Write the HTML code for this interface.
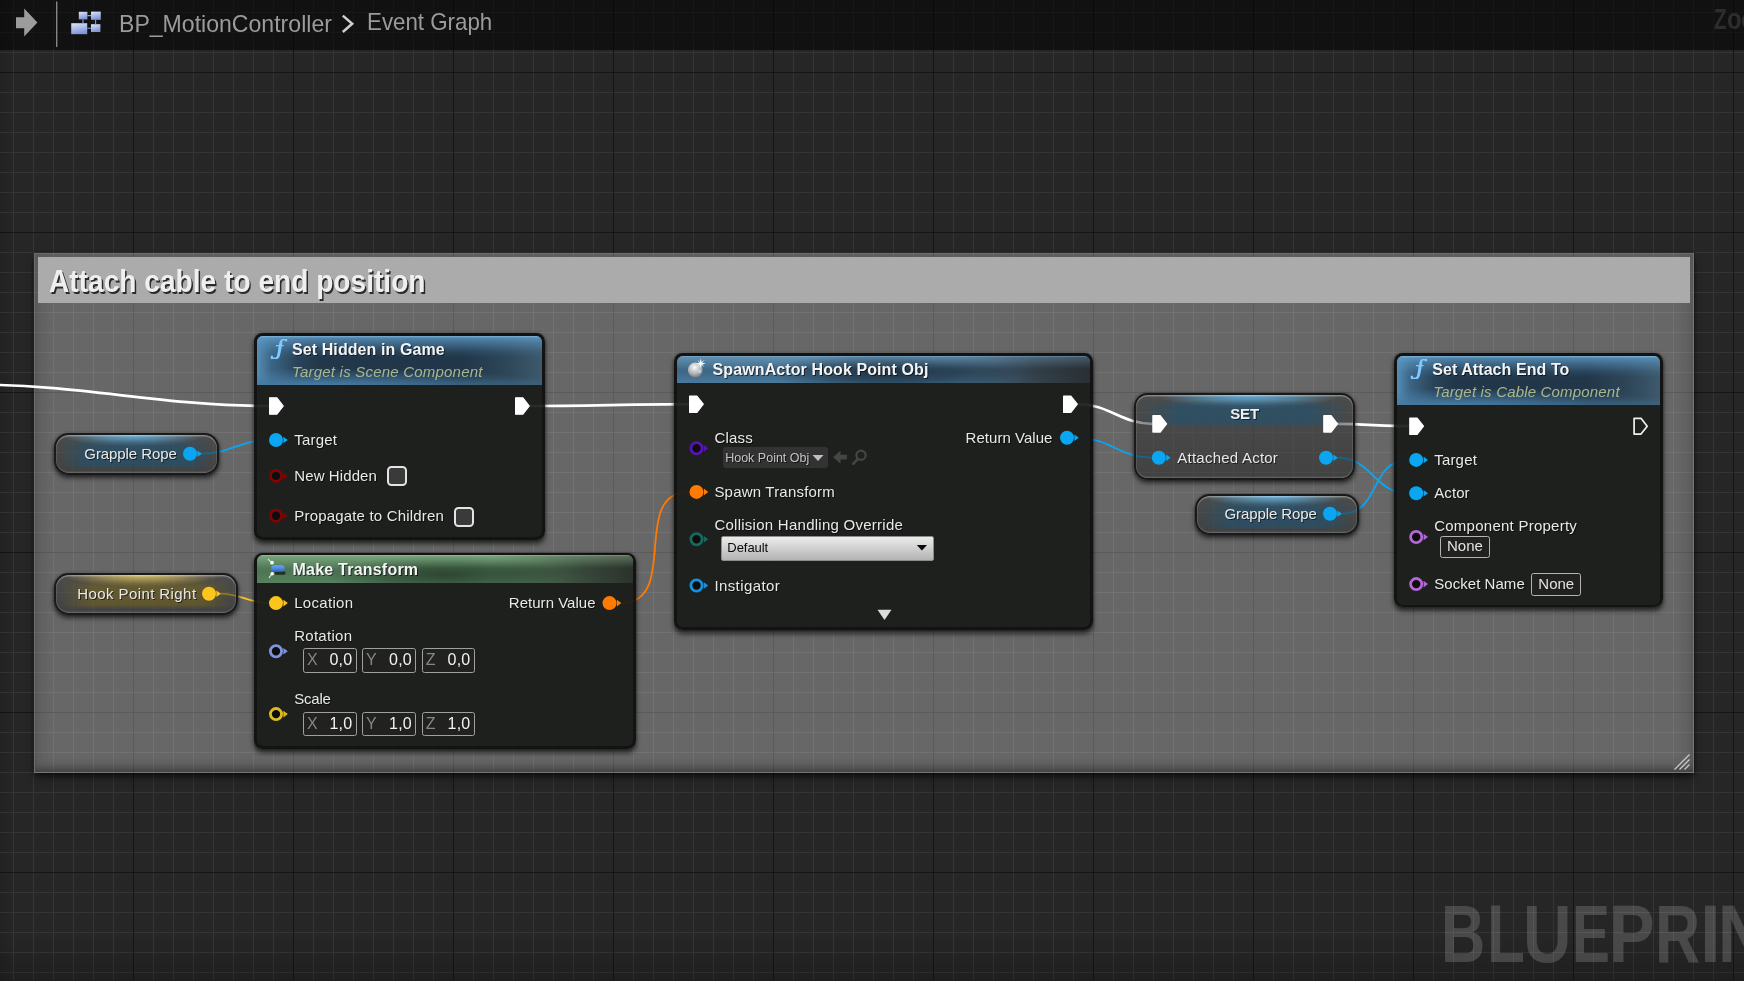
<!DOCTYPE html>
<html><head><meta charset="utf-8"><title>BP_MotionController - Event Graph</title>
<style>

html,body{margin:0;padding:0;background:#262626;}
body{width:1744px;height:981px;overflow:hidden;background:#262626;position:relative;font-family:"Liberation Sans", sans-serif;}
.abs{position:absolute;}
.t{position:absolute;white-space:nowrap;line-height:20px;height:20px;font-family:"Liberation Sans", sans-serif;}
#grid{position:absolute;left:0;top:0;width:1744px;height:981px;
 background-image:
  linear-gradient(to right, #151515 0, #151515 1px, transparent 1px),
  linear-gradient(to bottom, #151515 0, #151515 1px, transparent 1px),
  linear-gradient(to right, #353535 0, #353535 1px, transparent 1px),
  linear-gradient(to bottom, #353535 0, #353535 1px, transparent 1px);
 background-size:160px 160px,160px 160px,20px 20px,20px 20px;
 background-position:133px 0, 0 72px, 13px 0, 0 12px;
}
#vign{position:absolute;left:0;top:0;width:1744px;height:981px;
 background:linear-gradient(to bottom, rgba(0,0,0,0) 0, rgba(0,0,0,0) 940px, rgba(0,0,0,0.18) 981px),linear-gradient(to right, rgba(0,0,0,0.10) 0, rgba(0,0,0,0) 12px);}
#topbar{position:absolute;left:0;top:0;width:1744px;height:50px;background:rgba(0,0,0,0.553);}
#comment{position:absolute;left:34px;top:253px;width:1660px;height:520px;box-sizing:border-box;
 background:rgba(255,255,255,0.30);
 border:1px solid rgba(255,255,255,0.035);
 box-shadow: 0 5px 7px -1px rgba(0,0,0,0.62), 0 0 3px 0 rgba(0,0,0,0.40), inset 0 0 14px 7px rgba(0,0,0,0.115), inset 0 -7px 9px -4px rgba(0,0,0,0.34);
}
#ctitle{position:absolute;left:38px;top:257px;width:1652px;height:46px;background:#ababab;}
.node{position:absolute;border-radius:8.5px;background:rgba(9,9,9,0.89);box-shadow:0 3.5px 5px 0px rgba(0,0,0,0.62), 0 0 3px 0 rgba(0,0,0,0.35);}
.nin{position:absolute;left:2.9px;right:2.9px;top:2.6px;bottom:2.6px;border-radius:5.8px;background:rgba(52,60,50,0.32);overflow:hidden;}
.hdr{position:absolute;left:0;top:0;right:0;}
.vnode{position:absolute;box-sizing:border-box;border:2px solid #1a1a1a;box-shadow:0 3px 5px 0 rgba(0,0,0,0.62), 0 0 3px 0 rgba(0,0,0,0.35);overflow:hidden;}
.vbox{position:absolute;box-sizing:border-box;border:1.6px solid #a0a0a0;background:rgba(40,40,40,0.35);border-radius:2.5px;height:24.4px;}

</style></head><body>
<div id="wrap" style="position:absolute;left:0;top:0;width:1744px;height:981px;will-change:transform;">
<div id="grid"></div>
<div id="vign"></div>
<div class="abs" style="left:1440.8px;top:888.0px;font-size:82.2px;font-weight:bold;line-height:91.82px;color:rgba(255,255,255,0.165);transform-origin:0 0;transform:scaleX(0.7441);white-space:nowrap;">B</div><div class="abs" style="left:1486.7px;top:888.0px;font-size:82.2px;font-weight:bold;line-height:91.82px;color:rgba(255,255,255,0.165);transform-origin:0 0;transform:scaleX(0.7548);white-space:nowrap;">L</div><div class="abs" style="left:1522.9px;top:888.0px;font-size:82.2px;font-weight:bold;line-height:91.82px;color:rgba(255,255,255,0.165);transform-origin:0 0;transform:scaleX(0.8167);white-space:nowrap;">U</div><div class="abs" style="left:1571.7px;top:888.0px;font-size:82.2px;font-weight:bold;line-height:91.82px;color:rgba(255,255,255,0.165);transform-origin:0 0;transform:scaleX(0.6908);white-space:nowrap;">E</div><div class="abs" style="left:1609.1px;top:888.0px;font-size:82.2px;font-weight:bold;line-height:91.82px;color:rgba(255,255,255,0.165);transform-origin:0 0;transform:scaleX(0.833);white-space:nowrap;">P</div><div class="abs" style="left:1654.5px;top:888.0px;font-size:82.2px;font-weight:bold;line-height:91.82px;color:rgba(255,255,255,0.165);transform-origin:0 0;transform:scaleX(0.7619);white-space:nowrap;">R</div><div class="abs" style="left:1700.1px;top:888.0px;font-size:82.2px;font-weight:bold;line-height:91.82px;color:rgba(255,255,255,0.165);transform-origin:0 0;transform:scaleX(0.9041);white-space:nowrap;">I</div><div class="abs" style="left:1718.0px;top:888.0px;font-size:82.2px;font-weight:bold;line-height:91.82px;color:rgba(255,255,255,0.165);transform-origin:0 0;transform:scaleX(0.8279);white-space:nowrap;">N</div>
<div id="comment"></div>
<div id="ctitle"></div>
<div class="t" style="left:49.3px;top:264.3px;height:34px;line-height:34px;font-size:30.5px;font-weight:bold;transform-origin:0 50%;transform:scaleX(0.922);color:#efefef;text-shadow:1.6px 1.6px 0 #2a2a2a;">Attach cable to end position</div>
<svg class="abs" style="left:1670px;top:750px" width="24" height="24" viewBox="0 0 24 24"><g stroke="#c8c8c8" stroke-width="1.3" stroke-linecap="butt"><path d="M4.5,19.5 L19.5,4.5"/><path d="M9.5,19.5 L19.5,9.5"/><path d="M14.5,19.5 L19.5,14.5"/></g></svg>
<svg class="abs" style="left:0;top:0" width="1744" height="981" viewBox="0 0 1744 981">
<path d="M-25.4,384.6 C79.9,384.6 163.7,406.0 269.0,406.0" stroke="#ffffff" stroke-width="2.7" fill="none" stroke-linecap="round"/>
<path d="M530.0,406.0 C583.6,406.0 635.4,404.2 689.0,404.2" stroke="#ffffff" stroke-width="2.7" fill="none" stroke-linecap="round"/>
<path d="M1078.0,404.2 C1109.4,404.2 1121.1,423.9 1152.5,423.9" stroke="#ffffff" stroke-width="2.7" fill="none" stroke-linecap="round"/>
<path d="M1338.0,423.9 C1362.6,423.9 1384.8,426.2 1409.4,426.2" stroke="#ffffff" stroke-width="2.7" fill="none" stroke-linecap="round"/>
<path d="M201.5,453.8 C228.6,453.8 241.9,440.0 269.0,440.0" stroke="#0aa6f2" stroke-width="1.8" fill="none" stroke-linecap="round"/>
<path d="M220.5,593.7 C239.8,593.7 249.7,603.1 269.0,603.1" stroke="#fcc51c" stroke-width="1.8" fill="none" stroke-linecap="round"/>
<path d="M621.0,603.1 C680.7,603.1 629.3,491.9 689.0,491.9" stroke="#ff7a00" stroke-width="1.8" fill="none" stroke-linecap="round"/>
<path d="M1077.5,437.8 C1109.0,437.8 1120.5,457.7 1152.0,457.7" stroke="#0aa6f2" stroke-width="1.8" fill="none" stroke-linecap="round"/>
<path d="M1337.0,457.7 C1372.9,457.7 1373.1,493.3 1409.0,493.3" stroke="#0aa6f2" stroke-width="1.8" fill="none" stroke-linecap="round"/>
<path d="M1341.0,513.8 C1381.6,513.8 1368.4,459.9 1409.0,459.9" stroke="#0aa6f2" stroke-width="1.8" fill="none" stroke-linecap="round"/>
</svg>
<div class="vnode" style="left:54.2px;top:432.8px;width:164.6px;height:42.7px;border-radius:14.5px;background:radial-gradient(ellipse 44% 32% at 48% 0%, rgba(95,175,222,0.95) 0%, rgba(95,175,222,0.5) 55%, rgba(95,175,222,0) 100%),linear-gradient(to bottom, rgba(255,255,255,0.07), rgba(255,255,255,0.02)),rgba(14,16,14,0.46);"><div class="abs" style="left:0;right:0;top:4px;height:30px;background:linear-gradient(to bottom, rgba(36,82,112,0) 0%, rgba(36,82,112,0.66) 24%, rgba(36,82,112,0.66) 86%, rgba(36,82,112,0) 100%);-webkit-mask-image:linear-gradient(to right, transparent 2%, #000 20%, #000 80%, transparent 98%);mask-image:linear-gradient(to right, transparent 2%, #000 20%, #000 80%, transparent 98%);"></div><div class="abs" style="left:0;top:0;right:0;bottom:0;border-radius:12.5px;box-shadow:inset 0 1.5px 1px rgba(255,255,255,0.30), inset 0 0 0 1px rgba(255,255,255,0.07), inset 0 -1.5px 1px rgba(255,255,255,0.10);"></div></div>
<div class="vnode" style="left:54.2px;top:573.1px;width:183.7px;height:42.3px;border-radius:14.5px;background:radial-gradient(ellipse 44% 32% at 48% 0%, rgba(215,188,95,0.95) 0%, rgba(215,188,95,0.5) 55%, rgba(215,188,95,0) 100%),linear-gradient(to bottom, rgba(255,255,255,0.07), rgba(255,255,255,0.02)),rgba(14,16,14,0.46);"><div class="abs" style="left:0;right:0;top:4px;height:30px;background:linear-gradient(to bottom, rgba(120,102,30,0) 0%, rgba(120,102,30,0.55) 24%, rgba(120,102,30,0.55) 86%, rgba(120,102,30,0) 100%);-webkit-mask-image:linear-gradient(to right, transparent 2%, #000 20%, #000 80%, transparent 98%);mask-image:linear-gradient(to right, transparent 2%, #000 20%, #000 80%, transparent 98%);"></div><div class="abs" style="left:0;top:0;right:0;bottom:0;border-radius:12.5px;box-shadow:inset 0 1.5px 1px rgba(255,255,255,0.30), inset 0 0 0 1px rgba(255,255,255,0.07), inset 0 -1.5px 1px rgba(255,255,255,0.10);"></div></div>
<div class="vnode" style="left:1134.4px;top:393.3px;width:220.2px;height:86.4px;border-radius:13.5px;background:radial-gradient(ellipse 42% 17% at 52% 0%, rgba(95,175,222,0.95) 0%, rgba(95,175,222,0.5) 55%, rgba(95,175,222,0) 100%),linear-gradient(to bottom, rgba(255,255,255,0.07), rgba(255,255,255,0.02)),rgba(14,16,14,0.46);"><div class="abs" style="left:0;right:0;top:5px;height:27px;background:linear-gradient(to bottom, rgba(36,82,112,0) 0%, rgba(36,82,112,0.66) 24%, rgba(36,82,112,0.66) 86%, rgba(36,82,112,0) 100%);-webkit-mask-image:linear-gradient(to right, transparent 2%, #000 20%, #000 80%, transparent 98%);mask-image:linear-gradient(to right, transparent 2%, #000 20%, #000 80%, transparent 98%);"></div><div class="abs" style="left:0;top:0;right:0;bottom:0;border-radius:11.5px;box-shadow:inset 0 1.5px 1px rgba(255,255,255,0.30), inset 0 0 0 1px rgba(255,255,255,0.07), inset 0 -1.5px 1px rgba(255,255,255,0.10);"></div></div>
<div class="vnode" style="left:1194.5px;top:493.6px;width:164.3px;height:41.4px;border-radius:14.5px;background:radial-gradient(ellipse 44% 32% at 48% 0%, rgba(95,175,222,0.95) 0%, rgba(95,175,222,0.5) 55%, rgba(95,175,222,0) 100%),linear-gradient(to bottom, rgba(255,255,255,0.07), rgba(255,255,255,0.02)),rgba(14,16,14,0.46);"><div class="abs" style="left:0;right:0;top:4px;height:30px;background:linear-gradient(to bottom, rgba(36,82,112,0) 0%, rgba(36,82,112,0.66) 24%, rgba(36,82,112,0.66) 86%, rgba(36,82,112,0) 100%);-webkit-mask-image:linear-gradient(to right, transparent 2%, #000 20%, #000 80%, transparent 98%);mask-image:linear-gradient(to right, transparent 2%, #000 20%, #000 80%, transparent 98%);"></div><div class="abs" style="left:0;top:0;right:0;bottom:0;border-radius:12.5px;box-shadow:inset 0 1.5px 1px rgba(255,255,255,0.30), inset 0 0 0 1px rgba(255,255,255,0.07), inset 0 -1.5px 1px rgba(255,255,255,0.10);"></div></div>
<svg class="abs" style="left:0;top:0" width="1744" height="981" viewBox="0 0 1744 981">
<circle cx="190.0" cy="453.8" r="7.0" fill="#0aa6f2"/><path d="M197.4,450.5 L201.8,453.8 L197.4,457.1 Z" fill="#0aa6f2"/>
<circle cx="209.0" cy="593.7" r="7.0" fill="#fcc51c"/><path d="M216.4,590.4 L220.8,593.7 L216.4,597.0 Z" fill="#fcc51c"/>
<path d="M1152.9,415.7 L1160.2,415.7 L1166.6,423.9 L1160.2,432.1 L1152.9,432.1 Z" fill="#ffffff" stroke="#ffffff" stroke-width="1.2" stroke-linejoin="round"/>
<path d="M1323.8,415.7 L1331.1,415.7 L1337.5,423.9 L1331.1,432.1 L1323.8,432.1 Z" fill="#ffffff" stroke="#ffffff" stroke-width="1.2" stroke-linejoin="round"/>
<circle cx="1158.8" cy="457.7" r="7.0" fill="#0aa6f2"/><path d="M1166.2,454.4 L1170.6,457.7 L1166.2,461.0 Z" fill="#0aa6f2"/>
<circle cx="1326.0" cy="457.7" r="7.0" fill="#0aa6f2"/><path d="M1333.4,454.4 L1337.8,457.7 L1333.4,461.0 Z" fill="#0aa6f2"/>
<circle cx="1330.0" cy="513.8" r="7.0" fill="#0aa6f2"/><path d="M1337.4,510.5 L1341.8,513.8 L1337.4,517.1 Z" fill="#0aa6f2"/>
</svg>
<div class="t" style="left:84.3px;top:444px;font-size:15px;letter-spacing:-0.08px;color:#e9e9e9;font-weight:normal;font-style:normal;text-shadow:1px 1px 0 rgba(0,0,0,0.6);">Grapple Rope</div>
<div class="t" style="left:77.2px;top:584px;font-size:15px;letter-spacing:0.42px;color:#e9e9e9;font-weight:normal;font-style:normal;text-shadow:1px 1px 0 rgba(0,0,0,0.6);">Hook Point Right</div>
<div class="t" style="left:1224.4px;top:504px;font-size:15px;letter-spacing:-0.08px;color:#e9e9e9;font-weight:normal;font-style:normal;text-shadow:1px 1px 0 rgba(0,0,0,0.6);">Grapple Rope</div>
<div class="t" style="left:1177.3px;top:448px;font-size:15px;letter-spacing:0.23px;color:#e9e9e9;font-weight:normal;font-style:normal;text-shadow:1px 1px 0 rgba(0,0,0,0.6);">Attached Actor</div>
<div class="t" style="left:1230.2px;top:404px;font-size:15px;letter-spacing:-0.1px;color:#f0f0f0;font-weight:bold;font-style:normal;text-shadow:1px 1px 0 rgba(0,0,0,0.6);">SET</div>
<div class="node" style="left:254.1px;top:333.0px;width:290.9px;height:206.8px;"><div class="nin"><div class="hdr" style="height:49.2px;background:linear-gradient(to bottom, rgba(150,205,240,0.55) 0px, rgba(130,185,225,0) 2px),linear-gradient(to bottom, rgba(98,158,203,0.85) 0%, rgba(90,150,195,0.55) 14%, rgba(80,140,185,0.16) 32%, rgba(80,140,185,0) 44%),radial-gradient(ellipse 85% 34% at 22% 100%, rgba(72,128,170,0.9) 0%, rgba(72,128,170,0.5) 45%, rgba(72,128,170,0) 100%),linear-gradient(to top, rgba(62,100,128,0.55) 0%, rgba(62,100,128,0) 14%),linear-gradient(to right, rgba(88,145,188,0.95) 0%, rgba(82,138,180,0.55) 5%, rgba(80,135,175,0.15) 14%, rgba(80,135,175,0) 22%),linear-gradient(to left, rgba(80,112,132,0.62) 0%, rgba(75,108,128,0.30) 12%, rgba(70,100,120,0) 28%),linear-gradient(to right, #22384a, #213648);"></div></div></div>
<div class="node" style="left:254.1px;top:552.9px;width:381.8px;height:196.1px;"><div class="nin"><div class="hdr" style="height:27.3px;background:linear-gradient(to bottom, rgba(205,235,205,0.55) 0px, rgba(165,205,165,0.36) 1.5px, rgba(150,190,150,0.14) 9px, rgba(150,190,150,0) 13px),radial-gradient(ellipse 32% 70% at 50% 72%, rgba(26,40,28,0.62) 0%, rgba(26,40,28,0.35) 55%, rgba(26,40,28,0) 100%),linear-gradient(to right, rgba(44,50,44,0) 0%, rgba(44,50,44,0) 62%, rgba(44,50,44,0.72) 88%, rgba(40,44,40,0.92) 100%),linear-gradient(to bottom, #5d8b64 0%, #4c7553 60%, #568260 100%);"></div></div></div>
<div class="node" style="left:674.2px;top:353.0px;width:418.8px;height:276.8px;"><div class="nin"><div class="hdr" style="height:27.2px;background:linear-gradient(to bottom, rgba(150,200,235,0.60) 0px, rgba(125,175,215,0.30) 1.5px, rgba(120,170,210,0.10) 9px, rgba(120,170,210,0) 13px),radial-gradient(ellipse 30% 75% at 52% 62%, rgba(26,42,56,0.85) 0%, rgba(26,42,56,0.55) 50%, rgba(26,42,56,0) 100%),linear-gradient(to right, rgba(44,46,48,0) 0%, rgba(44,46,48,0) 62%, rgba(44,46,48,0.75) 88%, rgba(40,42,44,0.92) 100%),linear-gradient(to bottom, #55829f 0%, #3e6685 55%, #4a7a9c 100%);"></div></div></div>
<div class="node" style="left:1394.2px;top:353.0px;width:269.2px;height:254.4px;"><div class="nin"><div class="hdr" style="height:49.4px;background:linear-gradient(to bottom, rgba(150,205,240,0.55) 0px, rgba(130,185,225,0) 2px),linear-gradient(to bottom, rgba(98,158,203,0.85) 0%, rgba(90,150,195,0.55) 14%, rgba(80,140,185,0.16) 32%, rgba(80,140,185,0) 44%),radial-gradient(ellipse 85% 34% at 22% 100%, rgba(72,128,170,0.9) 0%, rgba(72,128,170,0.5) 45%, rgba(72,128,170,0) 100%),linear-gradient(to top, rgba(62,100,128,0.55) 0%, rgba(62,100,128,0) 14%),linear-gradient(to right, rgba(88,145,188,0.95) 0%, rgba(82,138,180,0.55) 5%, rgba(80,135,175,0.15) 14%, rgba(80,135,175,0) 22%),linear-gradient(to left, rgba(80,112,132,0.62) 0%, rgba(75,108,128,0.30) 12%, rgba(70,100,120,0) 28%),linear-gradient(to right, #22384a, #213648);"></div></div></div>
<svg class="abs" style="left:0;top:0" width="1744" height="981" viewBox="0 0 1744 981">
<path d="M269.6,397.8 L276.9,397.8 L283.3,406.0 L276.9,414.2 L269.6,414.2 Z" fill="#ffffff" stroke="#ffffff" stroke-width="1.2" stroke-linejoin="round"/>
<path d="M515.6,397.8 L522.9,397.8 L529.3,406.0 L522.9,414.2 L515.6,414.2 Z" fill="#ffffff" stroke="#ffffff" stroke-width="1.2" stroke-linejoin="round"/>
<circle cx="276.0" cy="440.0" r="7.0" fill="#0aa6f2"/><path d="M283.4,436.7 L287.8,440.0 L283.4,443.3 Z" fill="#0aa6f2"/>
<circle cx="276.0" cy="475.9" r="5.6" fill="#0d0d0d" stroke="#800404" stroke-width="2.8"/><path d="M283.4,472.6 L287.8,475.9 L283.4,479.2 Z" fill="#800404"/>
<circle cx="276.0" cy="515.7" r="5.6" fill="#0d0d0d" stroke="#800404" stroke-width="2.8"/><path d="M283.4,512.4 L287.8,515.7 L283.4,519.0 Z" fill="#800404"/>
<circle cx="276.0" cy="603.1" r="7.0" fill="#fcc51c"/><path d="M283.4,599.8 L287.8,603.1 L283.4,606.4 Z" fill="#fcc51c"/>
<circle cx="609.5" cy="603.1" r="7.0" fill="#ff7a00"/><path d="M616.9,599.8 L621.3,603.1 L616.9,606.4 Z" fill="#ff7a00"/>
<circle cx="276.0" cy="651.3" r="5.6" fill="#0d0d0d" stroke="#7f93e0" stroke-width="2.8"/><path d="M283.4,648.0 L287.8,651.3 L283.4,654.6 Z" fill="#7f93e0"/>
<circle cx="276.0" cy="714.1" r="5.6" fill="#0d0d0d" stroke="#dfbb1f" stroke-width="2.8"/><path d="M283.4,710.8 L287.8,714.1 L283.4,717.4 Z" fill="#dfbb1f"/>
<path d="M689.6,396.0 L696.9,396.0 L703.3,404.2 L696.9,412.4 L689.6,412.4 Z" fill="#ffffff" stroke="#ffffff" stroke-width="1.2" stroke-linejoin="round"/>
<path d="M1063.6,396.0 L1070.9,396.0 L1077.3,404.2 L1070.9,412.4 L1063.6,412.4 Z" fill="#ffffff" stroke="#ffffff" stroke-width="1.2" stroke-linejoin="round"/>
<circle cx="696.5" cy="448.2" r="5.6" fill="#0d0d0d" stroke="#5a12b8" stroke-width="2.8"/><path d="M703.9,444.9 L708.3,448.2 L703.9,451.5 Z" fill="#5a12b8"/>
<circle cx="1067.0" cy="437.8" r="7.0" fill="#0aa6f2"/><path d="M1074.4,434.5 L1078.8,437.8 L1074.4,441.1 Z" fill="#0aa6f2"/>
<circle cx="696.5" cy="491.9" r="7.0" fill="#ff7a00"/><path d="M703.9,488.6 L708.3,491.9 L703.9,495.2 Z" fill="#ff7a00"/>
<circle cx="696.5" cy="539.3" r="5.6" fill="#0d0d0d" stroke="#166a5e" stroke-width="2.8"/><path d="M703.9,536.0 L708.3,539.3 L703.9,542.6 Z" fill="#166a5e"/>
<circle cx="696.5" cy="585.5" r="5.6" fill="#0d0d0d" stroke="#1490dc" stroke-width="2.8"/><path d="M703.9,582.2 L708.3,585.5 L703.9,588.8 Z" fill="#1490dc"/>
<path d="M877.5,609.8 L891.5,609.8 L884.5,620 Z" fill="#dcdcdc"/>
<path d="M1409.8,418.0 L1417.1,418.0 L1423.5,426.2 L1417.1,434.4 L1409.8,434.4 Z" fill="#ffffff" stroke="#ffffff" stroke-width="1.2" stroke-linejoin="round"/>
<path d="M1634.1,418.3 L1641.0,418.3 L1647.2,426.2 L1641.0,434.1 L1634.1,434.1 Z" fill="none" stroke="#f0f0f0" stroke-width="1.7" stroke-linejoin="round"/>
<circle cx="1416.2" cy="459.9" r="7.0" fill="#0aa6f2"/><path d="M1423.6,456.6 L1428.0,459.9 L1423.6,463.2 Z" fill="#0aa6f2"/>
<circle cx="1416.2" cy="493.3" r="7.0" fill="#0aa6f2"/><path d="M1423.6,490.0 L1428.0,493.3 L1423.6,496.6 Z" fill="#0aa6f2"/>
<circle cx="1416.2" cy="537.0" r="5.6" fill="#0d0d0d" stroke="#b466d6" stroke-width="2.8"/><path d="M1423.6,533.7 L1428.0,537.0 L1423.6,540.3 Z" fill="#b466d6"/>
<circle cx="1416.2" cy="584.1" r="5.6" fill="#0d0d0d" stroke="#b466d6" stroke-width="2.8"/><path d="M1423.6,580.8 L1428.0,584.1 L1423.6,587.4 Z" fill="#b466d6"/>
</svg>
<div class="t" style="left:292.0px;top:340px;font-size:16px;letter-spacing:0.09px;color:#f4f4f4;font-weight:bold;font-style:normal;text-shadow:1px 1px 0 rgba(0,0,0,0.6);">Set Hidden in Game</div>
<div class="t" style="left:292.0px;top:362px;font-size:15px;letter-spacing:0.21px;color:#aab68c;font-weight:normal;font-style:italic;">Target is Scene Component</div>
<div class="t" style="left:294.3px;top:430px;font-size:15px;letter-spacing:0.2px;color:#e9e9e9;font-weight:normal;font-style:normal;text-shadow:1px 1px 0 rgba(0,0,0,0.6);">Target</div>
<div class="t" style="left:294.3px;top:466px;font-size:15px;letter-spacing:0.1px;color:#e9e9e9;font-weight:normal;font-style:normal;text-shadow:1px 1px 0 rgba(0,0,0,0.6);">New Hidden</div>
<div class="t" style="left:294.3px;top:506px;font-size:15px;letter-spacing:0.18px;color:#e9e9e9;font-weight:normal;font-style:normal;text-shadow:1px 1px 0 rgba(0,0,0,0.6);">Propagate to Children</div>
<div class="abs" style="left:386.6px;top:466.4px;width:20px;height:20px;box-sizing:border-box;border:2.4px solid #e4e4e4;border-radius:4.5px;background:#3a3a3a;"></div>
<div class="abs" style="left:453.8px;top:506.5px;width:20px;height:20px;box-sizing:border-box;border:2.4px solid #e4e4e4;border-radius:4.5px;background:#3a3a3a;"></div>
<div class="t" style="left:292.5px;top:560px;font-size:16px;letter-spacing:0.22px;color:#f4f4f4;font-weight:bold;font-style:normal;text-shadow:1px 1px 0 rgba(0,0,0,0.6);">Make Transform</div>
<div class="t" style="left:294.2px;top:593px;font-size:15px;letter-spacing:0.3px;color:#e9e9e9;font-weight:normal;font-style:normal;text-shadow:1px 1px 0 rgba(0,0,0,0.6);">Location</div>
<div class="t" style="left:294.2px;top:626px;font-size:15px;letter-spacing:0.28px;color:#e9e9e9;font-weight:normal;font-style:normal;text-shadow:1px 1px 0 rgba(0,0,0,0.6);">Rotation</div>
<div class="t" style="left:294.2px;top:689px;font-size:15px;letter-spacing:-0.2px;color:#e9e9e9;font-weight:normal;font-style:normal;text-shadow:1px 1px 0 rgba(0,0,0,0.6);">Scale</div>
<div class="t" style="right:1148.4px;top:593px;font-size:15px;letter-spacing:0.03px;color:#e9e9e9;font-weight:normal;font-style:normal;text-shadow:1px 1px 0 rgba(0,0,0,0.6);">Return Value</div>
<div class="vbox" style="left:303.1px;top:648.4px;width:53.8px;"><div class="t" style="left:3px;top:1px;font-size:16px;color:#858585;">X</div><div class="t" style="right:3.6px;top:1px;font-size:16px;color:#f2f2f2;letter-spacing:0.2px;">0,0</div></div>
<div class="vbox" style="left:362.1px;top:648.4px;width:54.4px;"><div class="t" style="left:3px;top:1px;font-size:16px;color:#858585;">Y</div><div class="t" style="right:3.6px;top:1px;font-size:16px;color:#f2f2f2;letter-spacing:0.2px;">0,0</div></div>
<div class="vbox" style="left:421.8px;top:648.4px;width:53.2px;"><div class="t" style="left:3px;top:1px;font-size:16px;color:#858585;">Z</div><div class="t" style="right:3.6px;top:1px;font-size:16px;color:#f2f2f2;letter-spacing:0.2px;">0,0</div></div>
<div class="vbox" style="left:303.1px;top:711.5px;width:53.8px;"><div class="t" style="left:3px;top:1px;font-size:16px;color:#858585;">X</div><div class="t" style="right:3.6px;top:1px;font-size:16px;color:#f2f2f2;letter-spacing:0.2px;">1,0</div></div>
<div class="vbox" style="left:362.1px;top:711.5px;width:54.4px;"><div class="t" style="left:3px;top:1px;font-size:16px;color:#858585;">Y</div><div class="t" style="right:3.6px;top:1px;font-size:16px;color:#f2f2f2;letter-spacing:0.2px;">1,0</div></div>
<div class="vbox" style="left:421.8px;top:711.5px;width:53.2px;"><div class="t" style="left:3px;top:1px;font-size:16px;color:#858585;">Z</div><div class="t" style="right:3.6px;top:1px;font-size:16px;color:#f2f2f2;letter-spacing:0.2px;">1,0</div></div>
<div class="t" style="left:712.6px;top:360px;font-size:16px;letter-spacing:0.1px;color:#f4f4f4;font-weight:bold;font-style:normal;text-shadow:1px 1px 0 rgba(0,0,0,0.6);">SpawnActor Hook Point Obj</div>
<div class="t" style="left:714.4px;top:428px;font-size:15px;letter-spacing:0.2px;color:#e9e9e9;font-weight:normal;font-style:normal;text-shadow:1px 1px 0 rgba(0,0,0,0.6);">Class</div>
<div class="t" style="left:714.4px;top:482px;font-size:15px;letter-spacing:0.2px;color:#e9e9e9;font-weight:normal;font-style:normal;text-shadow:1px 1px 0 rgba(0,0,0,0.6);">Spawn Transform</div>
<div class="t" style="left:714.4px;top:515px;font-size:15px;letter-spacing:0.26px;color:#e9e9e9;font-weight:normal;font-style:normal;text-shadow:1px 1px 0 rgba(0,0,0,0.6);">Collision Handling Override</div>
<div class="t" style="left:714.4px;top:576px;font-size:15px;letter-spacing:0.4px;color:#e9e9e9;font-weight:normal;font-style:normal;text-shadow:1px 1px 0 rgba(0,0,0,0.6);">Instigator</div>
<div class="t" style="right:691.6px;top:428px;font-size:15px;letter-spacing:0.03px;color:#e9e9e9;font-weight:normal;font-style:normal;text-shadow:1px 1px 0 rgba(0,0,0,0.6);">Return Value</div>
<div class="abs" style="left:722.5px;top:447px;width:105px;height:21px;background:#333333;border-radius:3px;"></div>
<div class="t" style="left:725.2px;top:448px;font-size:12.5px;letter-spacing:0.0px;color:#c4c4c4;font-weight:normal;font-style:normal;text-shadow:1px 1px 0 rgba(0,0,0,0.6);">Hook Point Obj</div>
<svg class="abs" style="left:0;top:0" width="1744" height="981" viewBox="0 0 1744 981">
<path d="M812.5,455 L823.5,455 L818,461 Z" fill="#c0c0c0"/>
<path d="M833,457.2 L840.5,450.8 L840.5,454.8 L846.8,454.8 L846.8,459.6 L840.5,459.6 L840.5,463.6 Z" fill="#454545"/>
<circle cx="861" cy="455.2" r="4.6" fill="none" stroke="#454545" stroke-width="2.2"/><path d="M857.8,459 L853.2,463.8" stroke="#454545" stroke-width="2.6" stroke-linecap="round"/>
</svg>
<div class="abs" style="left:721px;top:535.6px;width:213px;height:25px;box-sizing:border-box;border:1px solid #8d8d8d;border-radius:2px;background:linear-gradient(to bottom,#ececec 0%,#d2d2d2 45%,#b4b4b4 100%);"></div>
<div class="t" style="left:727.3px;top:538px;font-size:13px;letter-spacing:-0.05px;color:#0a0a0a;font-weight:normal;font-style:normal;">Default</div>
<svg class="abs" style="left:915px;top:543px" width="14" height="10" viewBox="0 0 14 10"><path d="M1.8,2 L12,2 L6.9,7.6 Z" fill="#0a0a0a"/></svg>
<div class="t" style="left:1432.2px;top:360px;font-size:16px;letter-spacing:0.07px;color:#f4f4f4;font-weight:bold;font-style:normal;text-shadow:1px 1px 0 rgba(0,0,0,0.6);">Set Attach End To</div>
<div class="t" style="left:1433.2px;top:382px;font-size:15px;letter-spacing:0.18px;color:#aab68c;font-weight:normal;font-style:italic;">Target is Cable Component</div>
<div class="t" style="left:1434.2px;top:450px;font-size:15px;letter-spacing:0.2px;color:#e9e9e9;font-weight:normal;font-style:normal;text-shadow:1px 1px 0 rgba(0,0,0,0.6);">Target</div>
<div class="t" style="left:1434.2px;top:483px;font-size:15px;letter-spacing:0.1px;color:#e9e9e9;font-weight:normal;font-style:normal;text-shadow:1px 1px 0 rgba(0,0,0,0.6);">Actor</div>
<div class="t" style="left:1434.2px;top:516px;font-size:15px;letter-spacing:0.25px;color:#e9e9e9;font-weight:normal;font-style:normal;text-shadow:1px 1px 0 rgba(0,0,0,0.6);">Component Property</div>
<div class="t" style="left:1434.2px;top:574px;font-size:15px;letter-spacing:0.05px;color:#e9e9e9;font-weight:normal;font-style:normal;text-shadow:1px 1px 0 rgba(0,0,0,0.6);">Socket Name</div>
<div class="vbox" style="left:1440.0px;top:535.5px;width:50px;height:22.3px;border-color:#b4b4b4;"><div class="t" style="left:6px;top:-0.4px;font-size:15px;color:#e2e2e2;">None</div></div>
<div class="vbox" style="left:1531.3px;top:573.3px;width:50px;height:22.3px;border-color:#b4b4b4;"><div class="t" style="left:6px;top:-0.4px;font-size:15px;color:#e2e2e2;">None</div></div>
<svg class="abs" style="left:270px;top:338px" width="19" height="23" viewBox="0 0 19 23"><path d="M17.1,1.05 L17.1,3.35 L15.1,3.35 C14.8,2.5 14.2,2.2 13.6,2.3 C12.9,2.4 12.5,3 12.3,4 L12.05,7 L13.6,7 L13.6,8.2 L11.75,8.2 C11.2,11.5 10.7,14.8 9.9,17.4 C9.1,20 8,21.1 6.2,21.1 L0.75,21.1 L0.75,17.7 L2.9,17.7 C2.9,18.8 3,19.55 3.6,19.55 L5.3,19.55 C6.3,19.55 6.8,18.6 7.15,17.1 C7.8,14.2 8.2,11 8.55,8.2 L5.95,8.2 L5.95,7 L8.85,7 C9.05,5.8 9.3,4.8 9.6,3.95 C10,2.7 10.5,1.9 11.15,1.5 C11.9,1 12.8,0.9 13.6,0.9 Z" fill="#7ccaff"/></svg>
<svg class="abs" style="left:1410.1px;top:358px" width="19" height="23" viewBox="0 0 19 23"><path d="M17.1,1.05 L17.1,3.35 L15.1,3.35 C14.8,2.5 14.2,2.2 13.6,2.3 C12.9,2.4 12.5,3 12.3,4 L12.05,7 L13.6,7 L13.6,8.2 L11.75,8.2 C11.2,11.5 10.7,14.8 9.9,17.4 C9.1,20 8,21.1 6.2,21.1 L0.75,21.1 L0.75,17.7 L2.9,17.7 C2.9,18.8 3,19.55 3.6,19.55 L5.3,19.55 C6.3,19.55 6.8,18.6 7.15,17.1 C7.8,14.2 8.2,11 8.55,8.2 L5.95,8.2 L5.95,7 L8.85,7 C9.05,5.8 9.3,4.8 9.6,3.95 C10,2.7 10.5,1.9 11.15,1.5 C11.9,1 12.8,0.9 13.6,0.9 Z" fill="#7ccaff"/></svg>
<svg class="abs" style="left:266px;top:557px" width="22" height="24" viewBox="0 0 22 24"><defs><linearGradient id="pg" x1="0" y1="0" x2="0" y2="1"><stop offset="0" stop-color="#6aa6ee"/><stop offset="0.45" stop-color="#4f8be4"/><stop offset="1" stop-color="#3463c2"/></linearGradient></defs><rect x="8.8" y="14.6" width="10.6" height="3.2" rx="1.4" fill="#1c2c1f" opacity="0.92"/><path d="M2.3,2.4 L5.6,5.4 M3.2,20.6 L5.8,17.2" stroke="#f4f4f4" stroke-width="1.1" stroke-linecap="round" opacity="0.85"/><circle cx="6" cy="5.7" r="1.85" fill="#ffffff"/><circle cx="6.2" cy="16.8" r="1.8" fill="#ffffff"/><rect x="5.2" y="8.3" width="13.4" height="6.4" rx="3.2" fill="url(#pg)"/></svg>
<svg class="abs" style="left:686px;top:357px" width="22" height="22" viewBox="0 0 22 22"><defs><radialGradient id="sg" cx="45%" cy="32%" r="72%"><stop offset="0" stop-color="#ffffff"/><stop offset="0.18" stop-color="#e6e6e6"/><stop offset="0.6" stop-color="#b2b4b6"/><stop offset="1" stop-color="#707274"/></radialGradient></defs><circle cx="9.3" cy="13" r="7.4" fill="url(#sg)"/><circle cx="13.4" cy="14.2" r="1.7" fill="#b4daf4" opacity="0.9"/><path d="M14.8,1.6 L15.7,5.4 L19.6,6.6 L15.7,7.7 L14.8,11 L13.8,7.7 L10.4,6.6 L13.8,5.5 Z" fill="#ffffff"/><path d="M12.2,3.9 L17.4,9.2 M17.5,3.8 L12.4,9.2" stroke="#ffffff" stroke-width="0.9" stroke-linecap="round" opacity="0.9"/></svg>
<div id="topbar"></div>
<svg class="abs" style="left:0;top:0" width="120" height="50" viewBox="0 0 120 50"><path d="M16,17.2 L24.2,17.2 L24.2,8.4 L37.4,22.6 L24.2,36.4 L24.2,28.2 L16,28.2 Z" fill="#9c9c9c"/><rect x="56" y="1.5" width="1.4" height="45.5" fill="#868686"/><defs><linearGradient id="bg1" x1="0" y1="0" x2="0.3" y2="1"><stop offset="0" stop-color="#dfe6fb"/><stop offset="1" stop-color="#7f96d8"/></linearGradient></defs><g fill="url(#bg1)"><rect x="78.8" y="11.8" width="8.6" height="7.6"/><rect x="91" y="11.6" width="9.8" height="8.2"/><rect x="71.2" y="23.2" width="16" height="11"/><rect x="91" y="24.2" width="9.4" height="7.8"/></g><g stroke="#8e9fd0" stroke-width="1.1"><path d="M87.4,15.6 L91,15.6 M83,19.4 L83,23.2 M95.6,19.8 L95.6,24.2 M87.2,28.2 L91,28.2"/></g></svg>
<div class="t" style="left:119.2px;top:14px;font-size:23.4px;letter-spacing:0px;color:#9b9b9b;font-weight:normal;font-style:normal;height:26px;line-height:26px;top:11px;transform-origin:0 50%;transform:scaleX(0.9865);">BP_MotionController</div>
<div class="t" style="left:366.6px;top:13px;font-size:23.4px;letter-spacing:0px;color:#9b9b9b;font-weight:normal;font-style:normal;height:26px;line-height:26px;top:9.3px;transform-origin:0 50%;transform:scaleX(0.954);">Event Graph</div>
<svg class="abs" style="left:338px;top:10px" width="20" height="28" viewBox="0 0 20 28"><path d="M4.8,5.6 L14.2,13.8 L4.8,22" fill="none" stroke="#cfcfcf" stroke-width="2.5" stroke-linejoin="miter"/></svg>
<div class="abs" style="left:1714.2px;top:2.2px;font-size:29.7px;font-weight:bold;line-height:33.17px;color:#2d2d2d;transform-origin:0 0;transform:scaleX(0.695);white-space:nowrap;">Z</div><div class="abs" style="left:1726.6px;top:2.2px;font-size:29.7px;font-weight:bold;line-height:33.17px;color:#2d2d2d;transform-origin:0 0;transform:scaleX(0.81);white-space:nowrap;">o</div><div class="abs" style="left:1740.9px;top:2.2px;font-size:29.7px;font-weight:bold;line-height:33.17px;color:#2d2d2d;transform-origin:0 0;transform:scaleX(0.81);white-space:nowrap;">o</div>
</div>
</body></html>
